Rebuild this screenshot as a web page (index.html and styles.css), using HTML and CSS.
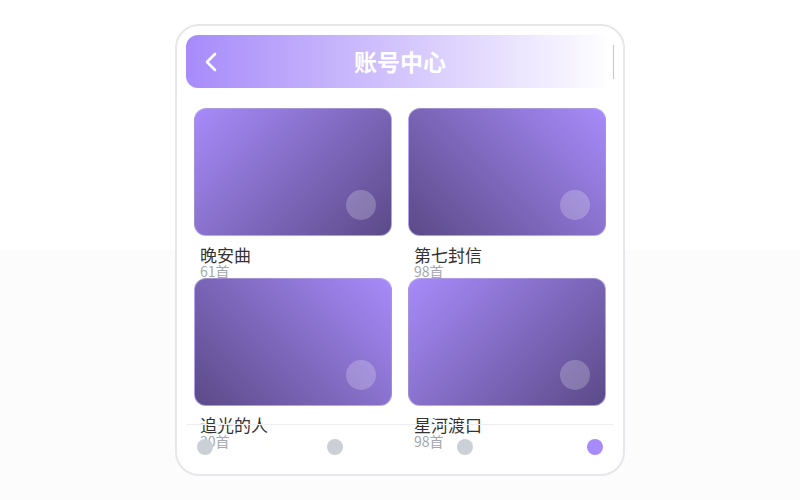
FILE: index.html
```html
<!DOCTYPE html>
<html lang="zh-CN">
<head>
  <meta charset="utf-8">
  <title>账号中心</title>
  <link rel="stylesheet" href="styles.css">
</head>
<body>
<div class="phone">
  <div class="top-bar">
    <a href="javascript:;" class="back">
      <svg width="14" height="20" viewBox="0 0 14 20"><path d="M11 2 L3 10 L11 18" fill="none" stroke="#fff" stroke-width="2.6" stroke-linecap="round" stroke-linejoin="round"/></svg>
    </a>
    <h2 class="title">账号中心</h2>
    <i class="edge"></i>
  </div>
  <ul class="album-list">
    <li class="album">
      <div class="cover cover-a"><span class="dot"></span></div>
      <div class="info"><p class="name">晚安曲</p><p class="count">61首</p></div>
    </li>
    <li class="album">
      <div class="cover cover-b"><span class="dot"></span></div>
      <div class="info"><p class="name">第七封信</p><p class="count">98首</p></div>
    </li>
    <li class="album">
      <div class="cover cover-b"><span class="dot"></span></div>
      <div class="info"><p class="name">追光的人</p><p class="count">30首</p></div>
    </li>
    <li class="album">
      <div class="cover cover-a"><span class="dot"></span></div>
      <div class="info"><p class="name">星河渡口</p><p class="count">98首</p></div>
    </li>
  </ul>
  <div class="tab-bar">
    <span></span>
    <span></span>
    <span></span>
    <span class="on"></span>
  </div>
</div>
</body>
</html>
```

FILE: styles.css
```css
html,body,h2,p,ul,li{margin:0;padding:0;}
ul{list-style:none;}
a{text-decoration:none;}
body{height:500px;display:flex;align-items:center;justify-content:center;background:linear-gradient(#fff 250px,#fcfcfd 250px);font-family:"Noto Sans CJK SC","Noto Sans",sans-serif;}
.phone{width:450px;height:452px;box-sizing:border-box;padding:9px;border:2px solid #e6e6eb;border-radius:24px;background:#fff;position:relative;overflow:hidden;}
.top-bar{height:53px;display:flex;align-items:center;justify-content:center;position:relative;border-radius:12px;background:linear-gradient(90deg,#a78bfa,#fff);}
.edge{position:absolute;right:0;top:10px;bottom:9px;width:1px;background:#c9b9fd;}
.back{position:absolute;left:18px;top:17px;display:block;width:14px;height:20px;}
.title{font-size:23px;font-weight:bold;color:#fff;line-height:1;}
.album-list{display:grid;grid-template-columns:1fr 1fr;column-gap:16px;padding:20px 8px 0;}
.cover{height:128px;box-sizing:border-box;border:1px solid rgba(200,185,250,.6);border-radius:12px;position:relative;}
.cover-a{background:linear-gradient(135deg,#a78bfa,#5b4a88);}
.cover-b{background:linear-gradient(225deg,#a78bfa,#5b4a88);}
.dot{position:absolute;right:15px;bottom:15px;width:30px;height:30px;border-radius:50%;background:rgba(255,255,255,.22);}
.info{padding:10px 6px 0;height:42px;box-sizing:border-box;}
.name{font-size:17px;line-height:18px;color:#333;}
.count{font-size:14px;line-height:14px;color:#a3a7ae;}
.tab-bar{position:absolute;left:10px;right:10px;bottom:6px;height:44px;box-sizing:border-box;padding:14px 10px 0;border-top:1px solid #eceef1;display:flex;justify-content:space-between;}
.tab-bar span{width:16px;height:16px;border-radius:50%;background:#cbd0d6;}
.tab-bar .on{background:#a78bfa;}
```
